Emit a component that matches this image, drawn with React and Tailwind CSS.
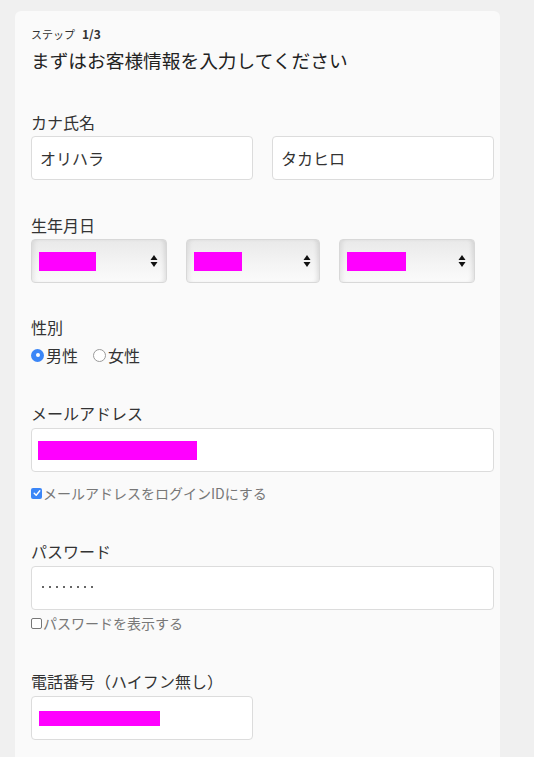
import { useState } from 'react';

const font = { fontFamily: '"Noto Sans CJK JP", "Noto Sans", sans-serif' };

const TextBox = ({ value, children, className = '' }) => (
    <div className={`h-[44px] rounded-[4px] border border-[#dcdcdc] bg-white flex items-center px-[8px] text-[16px] text-[#333] ${className}`}>
        {value}
        {children}
    </div>
);

const Block = ({ w }) => <div className={`h-[19px] bg-[#ff00ff] ${w}`}></div>;

const SelectBox = ({ w, block }) => (
    <div className={`relative h-[44px] rounded-[4px] border border-[#d8d8d8] bg-gradient-to-b from-[#e9e9e9] via-[#f3f3f3] to-[#fbfbfb] shadow-[inset_4px_0_4px_-2px_rgba(0,0,0,0.08),inset_-4px_0_4px_-2px_rgba(0,0,0,0.1)] flex items-center pl-[7px] pr-[8px] ${w}`}>
        <div className={`h-[19px] bg-[#ff00ff] ${block}`}></div>
        <svg className="ml-auto" width="8" height="14" viewBox="0 0 8 14">
            <path d="M4 1 L7.5 6 L0.5 6 Z" fill="#111" />
            <path d="M4 13 L7.5 8 L0.5 8 Z" fill="#111" />
        </svg>
    </div>
);

const Label = ({ children, className = '' }) => (
    <div className={`text-[16px] leading-[20px] text-[#333] ${className}`}>{children}</div>
);

const App = () => {
    const [gender] = useState('male');

    return (
        <div className="min-h-[757px] bg-[#f0f0f0] pt-[11px] pl-[15px]" style={font}>
            <div className="w-[485px] rounded-t-[6px] bg-[#fafafa] pl-4 pr-[6px] pt-4 pb-6">
                {/* Step header */}
                <div className="flex items-baseline text-[11px] leading-[14px] text-[#333]">
                    <span>ステップ</span>
                    <span className="ml-[7px] font-bold text-[12px]">1/3</span>
                </div>
                <div className="mt-[7px] text-[18.7px] leading-[24px] text-[#222]">まずはお客様情報を入力してください</div>

                {/* Kana name */}
                <Label className="mt-10">カナ氏名</Label>
                <div className="mt-1 flex gap-[19px]">
                    <TextBox value="オリハラ" className="w-[222px]" />
                    <TextBox value="タカヒロ" className="w-[222px]" />
                </div>

                {/* Birthday */}
                <Label className="mt-[35px]">生年月日</Label>
                <div className="mt-1 flex gap-[19px]">
                    <SelectBox w="w-[136px]" block="w-[57px]" />
                    <SelectBox w="w-[134px]" block="w-[48px]" />
                    <SelectBox w="w-[136px]" block="w-[59px]" />
                </div>

                {/* Gender */}
                <Label className="mt-[34px]">性別</Label>
                <div className="mt-2 flex items-center text-[16px] leading-[20px] text-[#333]">
                    <span className={`w-[13px] h-[13px] rounded-full flex items-center justify-center ${gender === 'male' ? 'bg-[#3b86f7]' : 'border border-[#999]'}`}>
                        <span className="w-[4px] h-[4px] rounded-full bg-white"></span>
                    </span>
                    <span className="ml-[2px]">男性</span>
                    <span className="ml-[15px] w-[13px] h-[13px] rounded-full border border-[#9a9a9a] bg-white"></span>
                    <span className="ml-[2px]">女性</span>
                </div>

                {/* Email */}
                <Label className="mt-[38px]">メールアドレス</Label>
                <TextBox className="mt-[5px] w-[463px] !px-[6px]">
                    <Block w="w-[159px]" />
                </TextBox>
                <div className="mt-3 flex items-center text-[14px] leading-[18px] text-[#777]">
                    <span className="w-[11px] h-[11px] rounded-[2px] bg-[#3b86f7] flex items-center justify-center">
                        <svg width="8" height="8" viewBox="0 0 8 8">
                            <path d="M1.2 4.2 L3.2 6.2 L6.8 1.8" stroke="white" strokeWidth="1.4" fill="none" strokeLinecap="round" strokeLinejoin="round" />
                        </svg>
                    </span>
                    <span className="ml-[1px]">メールアドレスをログインIDにする</span>
                </div>

                {/* Password */}
                <Label className="mt-[39px]">パスワード</Label>
                <TextBox className="mt-[5px] w-[463px] !px-[10px]">
                    <div className="flex gap-[5px] pb-[2px]">
                        {Array.from({ length: 8 }).map((_, i) => (
                            <span key={i} className="w-[2px] h-[2px] rounded-full bg-[#333]"></span>
                        ))}
                    </div>
                </TextBox>
                <div className="mt-1 flex items-center text-[14px] leading-[18px] text-[#777]">
                    <span className="w-[11px] h-[11px] rounded-[2px] border border-[#777] bg-white"></span>
                    <span className="ml-[1px]">パスワードを表示する</span>
                </div>

                {/* Phone */}
                <Label className="mt-[39px]">電話番号（ハイフン無し）</Label>
                <TextBox className="mt-[5px] w-[222px] !px-[7px]">
                    <div className="h-[15px] w-[121px] bg-[#ff00ff]"></div>
                </TextBox>
            </div>
        </div>
    );
};

export default App;
